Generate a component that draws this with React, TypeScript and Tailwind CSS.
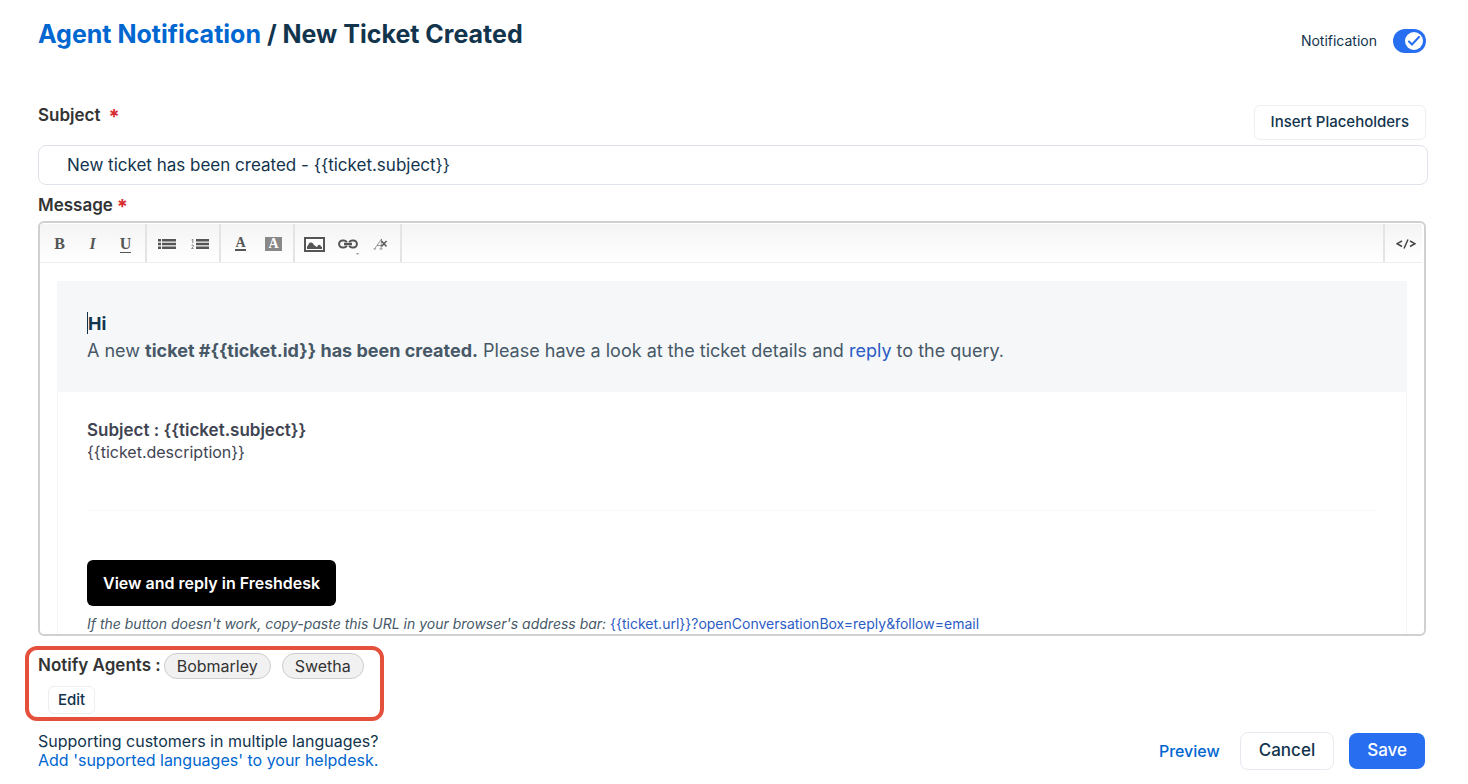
import { useState } from "react";
import type { ReactNode } from "react";

function ToolButton({ label, children }: { label: string; children: ReactNode }) {
  return (
    <button
      type="button"
      aria-label={label}
      className="w-[33px] h-full pt-0.5 flex items-center justify-center text-[#555] hover:text-black"
    >
      {children}
    </button>
  );
}

function ToolGroup({ children }: { children: ReactNode }) {
  return <div className="flex h-full px-[3px] border-r-2 border-[#e4e4e4]">{children}</div>;
}

function BulletListIcon() {
  return (
    <svg width="18" height="10" viewBox="0 0 18 10" fill="currentColor">
      <path d="M0 0h3v2.500H0zM0 3.800h3v2.400H0zM0 7.500h3V10H0zM4 0h14v2.500H4zM4 3.800h14v2.400H4zM4 7.500h14V10H4z" />
    </svg>
  );
}

function NumberListIcon() {
  return (
    <svg width="18" height="10" viewBox="0 0 18 10" fill="currentColor">
      <path d="M5 0h13v2.500H5zM5 3.800h13v2.400H5zM5 7.500h13V10H5z" />
      <path
        d="M.6 1 1.800.3v3.900M.6 6.800c.2-1.100 2-1 1.900.1C2.400 7.800 1.100 8.600.6 9.600h2.100"
        fill="none"
        stroke="currentColor"
        strokeWidth=".7"
      />
    </svg>
  );
}

function ImageIcon() {
  return (
    <svg width="21" height="15" viewBox="0 0 21 15">
      <rect x="1" y="1" width="19" height="13" fill="#fff" stroke="currentColor" strokeWidth="2" />
      <path
        d="M3 12V9.500C4 9 4.200 8 4.800 6.800 5.500 5.400 7.600 5 8.800 6.200c.8.800.9 2 1.900 2.300.8.300 1.200 1.400 2.200 1.300.9-.1.700-2 2.300-2.100 1.500 0 1.300 1.900 2.800 2.300v2z"
        fill="currentColor"
      />
    </svg>
  );
}

function LinkIcon() {
  return (
    <svg width="20" height="10" viewBox="0 0 20 10" fill="none" stroke="currentColor" strokeWidth="2">
      <path d="M8.800 3.200A3.600 3.300 0 0 0 5.600 1.500h-1a3.500 3.500 0 0 0 0 7h1a3.600 3.300 0 0 0 3.200-1.700" />
      <path d="M11.200 3.200a3.600 3.300 0 0 1 3.200-1.700h1a3.500 3.500 0 0 1 0 7h-1a3.600 3.300 0 0 1-3.200-1.700" />
      <path d="M6 5h8" strokeWidth="2.400" />
    </svg>
  );
}

function ClearFormatIcon() {
  return (
    <svg width="15" height="12" viewBox="0 0 15 12" fill="none" stroke="currentColor">
      <path d="M.5 11h2.500M1.500 11 8.500 1 8 11M6.500 11h3M4 7.500h4.300" strokeWidth=".6" />
      <path d="m8.500 3 5 5.500M13.500 3l-5 5.500" strokeWidth="1.400" />
    </svg>
  );
}

function Toolbar() {
  return (
    <div className="h-[39px] mr-0.5 flex border-b border-[#eee] bg-linear-to-b from-[#f4f4f4] to-white font-['Liberation_Serif',serif] text-base leading-none font-bold">
      <ToolGroup>
        <ToolButton label="Bold">B</ToolButton>
        <ToolButton label="Italic">
          <span className="italic">I</span>
        </ToolButton>
        <ToolButton label="Underline">
          <span className="border-b border-current">U</span>
        </ToolButton>
      </ToolGroup>
      <ToolGroup>
        <ToolButton label="Bulleted list">
          <BulletListIcon />
        </ToolButton>
        <ToolButton label="Numbered list">
          <NumberListIcon />
        </ToolButton>
      </ToolGroup>
      <ToolGroup>
        <ToolButton label="Text color">
          <span className="text-sm leading-[12px] border-b-2 border-current">A</span>
        </ToolButton>
        <ToolButton label="Highlight color">
          <span className="w-[17px] h-[14px] bg-[#888] text-white text-sm leading-[14px]">A</span>
        </ToolButton>
      </ToolGroup>
      <ToolGroup>
        <ToolButton label="Insert image">
          <ImageIcon />
        </ToolButton>
        <ToolButton label="Insert link">
          <span className="relative">
            <LinkIcon />
            <svg className="absolute top-[14px] -right-px" width="3" height="2" viewBox="0 0 3 2" fill="#999">
              <path d="M0 0h3L1.500 2z" />
            </svg>
          </span>
        </ToolButton>
        <ToolButton label="Clear formatting">
          <ClearFormatIcon />
        </ToolButton>
      </ToolGroup>
      <button
        type="button"
        aria-label="Show code"
        className="ml-auto w-[39px] pt-0.5 pl-1 flex items-center justify-center border-l-2 border-[#e4e4e4] text-[#444]"
      >
        <svg width="20" height="10" viewBox="0 0 20 10" fill="none" stroke="currentColor" strokeWidth="1.500">
          <path d="M6 2 1 4.700 6 7.500M14 2l5 2.700-5 2.800M12 .5 8 9.500" />
        </svg>
      </button>
    </div>
  );
}

function MessageBody() {
  return (
    <div className="h-[371px] overflow-hidden px-[17px] pt-[18px]">
      <div className="bg-[#f5f7f9] px-[30px] py-7 text-lg leading-[27px] text-[#475867]">
        <div className="flex items-center h-7">
          <span className="h-[22px] w-px bg-[#12344d]" />
          <strong className="font-bold text-[#12344d]">Hi</strong>
        </div>
        <p>
          A new <strong className="font-bold">ticket #{"{{ticket.id}}"} has been created.</strong> Please have a
          look at the ticket details and{" "}
          <a href="#reply" className="text-[#2c5cc5]">
            reply
          </a>{" "}
          to the query.
        </p>
      </div>
      <div className="border-x border-[#f3f5f7] px-[29px] pt-7 pb-10">
        <div className="text-base leading-[22px] text-[#3f4452] pb-[47px] border-b border-[#f9f9fa]">
          <p className="text-[17px] leading-[21px] font-semibold">Subject : {"{{ticket.subject}}"}</p>
          <p>{"{{ticket.description}}"}</p>
        </div>
        <a
          href="#ticket"
          className="mt-[49px] inline-flex items-center h-[46px] px-4 rounded-md bg-black text-white text-base font-semibold"
        >
          View and reply in Freshdesk
        </a>
        <p className="mt-2 text-sm leading-5 text-[#475867]">
          <em>If the button doesn't work, copy-paste this URL in your browser's address bar:</em>{" "}
          <a href="#url" className="text-[#2c5cc5]">
            {"{{ticket.url}}?openConversationBox=reply&follow=email"}
          </a>
        </p>
      </div>
    </div>
  );
}

const agents = ["Bobmarley", "Swetha"];

export default function App() {
  const [enabled, setEnabled] = useState(true);
  const [subject, setSubject] = useState("New ticket has been created - {{ticket.subject}}");

  return (
    <div className="min-h-screen bg-white text-[#12344d] font-['Inter',sans-serif] pl-[38px] pr-10 pt-[18px]">
      <header className="flex justify-between items-start pr-0.5">
        <h1 className="text-[25px] leading-8 font-bold">
          <a href="#agent-notification" className="text-[#0066d0]">
            Agent Notification
          </a>{" "}
          / New Ticket Created
        </h1>
        <label className="flex items-center gap-4 mt-[11px] text-sm leading-6 cursor-pointer">
          Notification
          <input
            type="checkbox"
            role="switch"
            checked={enabled}
            onChange={(e) => setEnabled(e.target.checked)}
            className="sr-only"
          />
          <span
            className={`w-[33px] h-6 rounded-full p-[3px] flex ${
              enabled ? "justify-end bg-[#276ef1]" : "justify-start bg-gray-300"
            }`}
          >
            <span className="w-[18px] h-[18px] rounded-full bg-white flex items-center justify-center">
              <svg width="12" height="10" viewBox="0 0 12 10" fill="none" stroke="#276ef1" strokeWidth="2">
                <path d="m1 5.500 3 3L11 1" strokeLinecap="round" />
              </svg>
            </span>
          </span>
        </label>
      </header>

      <div className="flex justify-between items-start pr-0.5 mt-[52px]">
        <label htmlFor="subject" className="flex text-[17px] leading-5 font-semibold text-[#333]">
          Subject <span className="ml-2 text-xl leading-6 font-bold text-[#d72d30]">*</span>
        </label>
        <button
          type="button"
          className="h-[35px] px-4 rounded-md border border-[#ebeff3] text-[15px] font-medium"
        >
          Insert Placeholders
        </button>
      </div>
      <input
        id="subject"
        type="text"
        value={subject}
        onChange={(e) => setSubject(e.target.value)}
        className="mt-[5px] block w-full h-10 rounded-lg border border-[#dfe3eb] px-7 text-[17px]"
      />

      <div id="message" className="mt-[10px] h-5 flex text-[17px] leading-5 font-semibold text-[#333]">
        Message <span className="ml-1 text-xl leading-6 font-bold text-[#d72d30]">*</span>
      </div>
      <section
        aria-labelledby="message"
        className="mt-[6px] mr-0.5 rounded-md border-2 border-[#d0d0d0] overflow-hidden"
      >
        <div className="pt-px">
          <Toolbar />
          <MessageBody />
        </div>
      </section>

      <div className="mt-[10px] -ml-[13px] w-[359px] rounded-xl border-4 border-[#e5503c] px-[9px] py-[3px]">
        <div className="flex items-center text-[#333] text-base">
          <span className="text-[17px] font-semibold mr-[3px]">Notify Agents :</span>
          <ul className="flex gap-[11px]">
            {agents.map((agent) => (
              <li
                key={agent}
                className="h-[26px] px-3 rounded-full border border-[#ccc] bg-[#f1f1f1] leading-6"
              >
                {agent}
              </li>
            ))}
          </ul>
        </div>
        <button
          type="button"
          className="ml-[10px] mt-[7px] block h-7 px-[9px] rounded-md border border-[#ebeff3] text-[15px] font-medium"
        >
          Edit
        </button>
      </div>

      <footer className="flex justify-between items-start mt-[11px] pr-[3px]">
        <p className="text-base leading-[19px]">
          Supporting customers in multiple languages?
          <br />
          <a href="#languages" className="text-[#0066d0]">
            Add 'supported languages' to your helpdesk.
          </a>
        </p>
        <div className="flex items-center text-[17px] font-medium">
          <a href="#preview" className="text-base text-[#0066d0] mr-5">
            Preview
          </a>
          <button type="button" className="h-[38px] px-[18px] mr-[15px] rounded-lg border border-[#e6eaf0]">
            Cancel
          </button>
          <button type="button" className="h-9 px-[18px] rounded-lg bg-[#276ef1] text-white">
            Save
          </button>
        </div>
      </footer>
    </div>
  );
}
